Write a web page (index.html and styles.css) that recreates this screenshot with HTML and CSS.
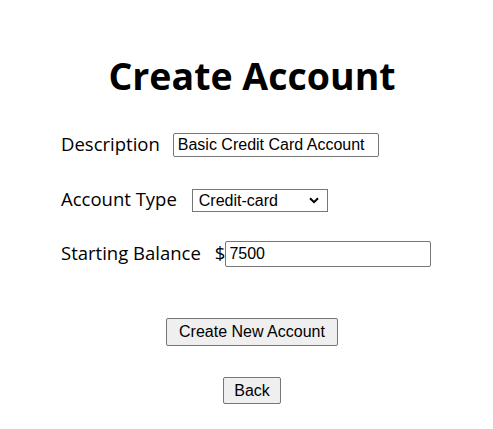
FILE: index.html
```html
<!DOCTYPE html>
<html>
<head>
<meta charset="utf-8">
<link rel="stylesheet" href="styles.css">
</head>
<body>
<div class="page">
  <h1 class="title">Create Account</h1>
  <form class="form">
    <div class="row">
      <label class="label label-desc">Description</label>
      <input class="field field-desc" type="text" value="Basic Credit Card Account">
    </div>
    <div class="row">
      <label class="label label-type">Account Type</label>
      <span class="select-wrap">
        <select class="field field-select">
          <option>Credit-card</option>
        </select>
        <svg class="chevron" width="10" height="7" viewBox="0 0 10 7"><path d="M1 1.2 L5 5.2 L9 1.2" fill="none" stroke="#000" stroke-width="2"/></svg>
      </span>
    </div>
    <div class="row">
      <label class="label label-bal">Starting Balance</label>
      <span class="dollar">$</span><input class="field field-bal" type="text" value="7500">
    </div>
    <div class="actions">
      <button type="button" class="btn btn-create">Create New Account</button>
      <button type="button" class="btn btn-back">Back</button>
    </div>
  </form>
</div>
</body>
</html>
```

FILE: styles.css
```css
html, body {
  margin: 0;
  padding: 0;
  background: #fff;
}
.page {
  width: 493px;
  padding-left: 11px;
  box-sizing: border-box;
  font-family: "Open Sans", "Noto Sans", sans-serif;
  color: #000;
}
.title {
  margin: 0;
  padding-top: 52px;
  height: 48px;
  text-align: center;
  font-size: 37.5px;
  font-weight: 700;
  line-height: 48px;
}
.form {
  padding-left: 50px;
  padding-top: 30px;
  display: flex;
  flex-direction: column;
}
.row {
  display: flex;
  align-items: center;
  height: 30px;
  margin-bottom: 25px;
}
.row:nth-child(2) { margin-bottom: 24px; }
.label {
  font-size: 18.5px;
  margin-right: 12px;
  margin-bottom: 4px;
}
.label-desc { margin-right: 13px; }
.label-type { margin-right: 15px; }
.label-bal { margin-right: 14px; }
.field {
  font-family: "Liberation Sans", Arial, sans-serif;
  font-size: 16px;
  color: #000;
  border: 1px solid #767676;
  border-radius: 2px;
  background: #fff;
  box-sizing: border-box;
  margin: 0;
}
.field-desc {
  width: 206px;
  height: 24px;
  padding: 1px 4px;
}
.select-wrap {
  position: relative;
  display: inline-flex;
}
.field-select {
  -webkit-appearance: none;
  appearance: none;
  width: 136px;
  height: 23px;
  padding: 0 0 0 6px;
  border-radius: 0;
}
.chevron {
  position: absolute;
  right: 9px;
  top: 8px;
  pointer-events: none;
}
.dollar {
  font-size: 18.5px;
  margin-bottom: 4px;
}
.field-bal {
  width: 206px;
  height: 26px;
  padding: 1px 3px;
}
.actions {
  display: flex;
  flex-direction: column;
  align-items: center;
  gap: 31px;
  margin-left: -50px;
  padding-top: 24px;
}
.btn {
  font-family: "Liberation Sans", Arial, sans-serif;
  font-size: 16px;
  color: #000;
  background: #efefef;
  border: 1px solid #767676;
  border-radius: 2px;
  padding: 1px 12px;
  height: 28px;
  margin: 0;
}
.btn-back { height: 27px; padding: 1px 10px; }
```
